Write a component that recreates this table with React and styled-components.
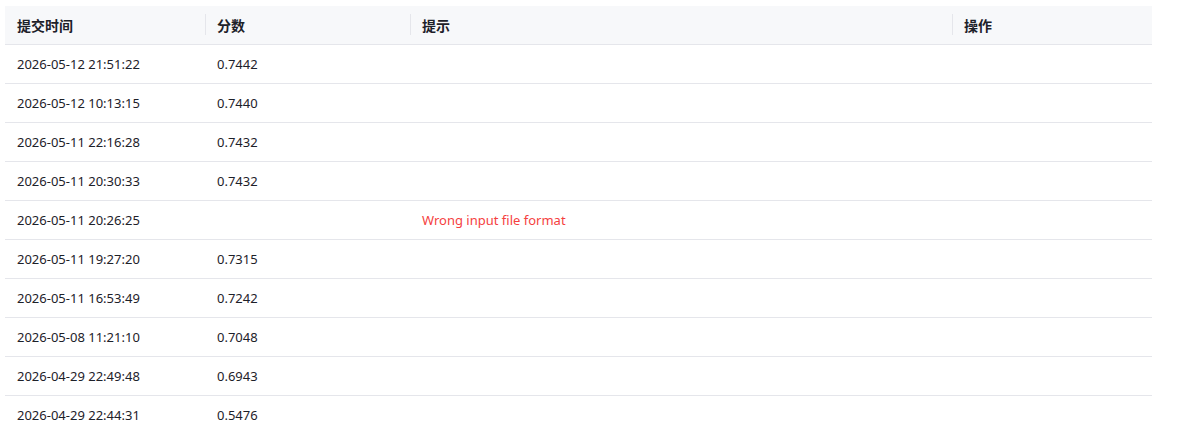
import { createGlobalStyle, styled } from 'styled-components';

const rows = [
  { time: '2026-05-12 21:51:22', score: '0.7442', tip: '' },
  { time: '2026-05-12 10:13:15', score: '0.7440', tip: '' },
  { time: '2026-05-11 22:16:28', score: '0.7432', tip: '' },
  { time: '2026-05-11 20:30:33', score: '0.7432', tip: '' },
  { time: '2026-05-11 20:26:25', score: '', tip: 'Wrong input file format' },
  { time: '2026-05-11 19:27:20', score: '0.7315', tip: '' },
  { time: '2026-05-11 16:53:49', score: '0.7242', tip: '' },
  { time: '2026-05-08 11:21:10', score: '0.7048', tip: '' },
  { time: '2026-04-29 22:49:48', score: '0.6943', tip: '' },
  { time: '2026-04-29 22:44:31', score: '0.5476', tip: '' },
];

const columns = [
  { title: '提交时间', width: 200 },
  { title: '分数', width: 205 },
  { title: '提示', width: 542 },
  { title: '操作', width: 200 },
];

const App = () => {
  return (
    <>
      <GlobalStyle />
      <Page>
        <Table>
          <colgroup>
            {columns.map((col) => (
              <col key={col.title} style={{ width: col.width }} />
            ))}
          </colgroup>
          <thead>
            <tr>
              {columns.map((col, i) => (
                <HeadCell key={col.title} $divider={i > 0}>
                  {col.title}
                </HeadCell>
              ))}
            </tr>
          </thead>
          <tbody>
            {rows.map((row) => (
              <BodyRow key={row.time}>
                <Cell>{row.time}</Cell>
                <Cell>{row.score}</Cell>
                <Cell>{row.tip && <ErrorTip>{row.tip}</ErrorTip>}</Cell>
                <Cell />
              </BodyRow>
            ))}
          </tbody>
        </Table>
      </Page>
    </>
  );
};

export default App;

const GlobalStyle = createGlobalStyle`
  body {
    margin: 0;
    background: #fff;
    font-family: "Noto Sans", "Noto Sans CJK SC", sans-serif;
  }
`;

const Page = styled.div`
  padding: 6px 5px;
`;

const Table = styled.table`
  width: 1147px;
  border-collapse: collapse;
  table-layout: fixed;
  font-size: 13px;
  color: #1d2129;
`;

const HeadCell = styled.th`
  position: relative;
  height: 38px;
  padding: 0 12px;
  background: #f7f8fa;
  border-bottom: 1px solid #e5e6eb;
  text-align: left;
  font-weight: 700;
  font-size: 14px;
  font-family: "Noto Sans CJK SC", sans-serif;

  &::before {
    content: '';
    display: ${({ $divider }) => ($divider ? 'block' : 'none')};
    position: absolute;
    left: 0;
    top: 8px;
    width: 1px;
    height: 21px;
    background: #e5e6eb;
  }
`;

const BodyRow = styled.tr`
  height: 39px;
`;

const Cell = styled.td`
  padding: 0 12px;
  height: 38px;
  border-bottom: 1px solid #e5e6eb;
  white-space: nowrap;
`;

const ErrorTip = styled.span`
  color: #f53f3f;
`;
